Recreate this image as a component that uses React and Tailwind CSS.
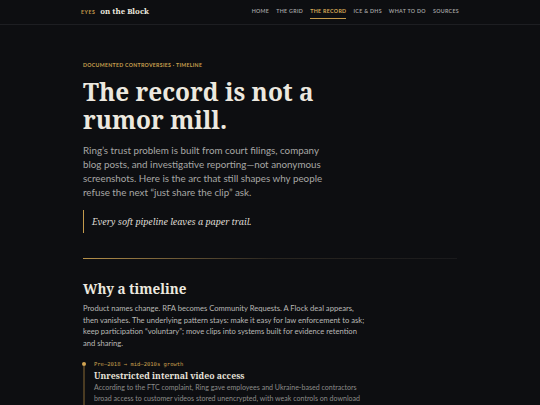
const nav = ["HOME", "THE GRID", "THE RECORD", "ICE & DHS", "WHAT TO DO", "SOURCES"];

function NavItem({ label, active }) {
  if (active) {
    return (
      <span className="relative text-[5.3px] font-bold tracking-[0.06em] text-[#d6a957]">
        {label}
        <span className="absolute left-0 right-0 top-[10px] h-[1px] bg-[#c49a4c]" />
      </span>
    );
  }
  return <span className="text-[5.3px] font-semibold tracking-[0.06em] text-[#a9a9a9]">{label}</span>;
}

export default function App() {
  return (
    <div className="min-h-[405px] w-full bg-[#0d0e11] font-['Lato',sans-serif] text-[#e9e5dc]">
      <header className="h-[25px] border-b border-[#1d1e22]">
        <div className="mx-auto flex h-full max-w-[378px] items-center justify-between">
          <div className="flex items-baseline gap-[5px]">
            <span className="text-[5.2px] font-bold tracking-[0.1em] text-[#c49a4c]">EYES</span>
            <span className="font-['Noto_Serif',serif] text-[7.8px] font-bold text-[#ece8df]">on the Block</span>
          </div>
          <nav className="flex items-center gap-[7px]">
            {nav.map((n) => (
              <NavItem key={n} label={n} active={n === "THE RECORD"} />
            ))}
          </nav>
        </div>
      </header>
      <main className="mx-auto max-w-[374px] pt-[36px]">
        <div className="text-[5.2px] font-bold leading-[8px] tracking-[0.06em] text-[#c9a04f]">DOCUMENTED CONTROVERSIES · TIMELINE</div>
        <h1 className="mt-[9px] font-['Noto_Serif',serif] text-[24.4px] font-bold leading-[28px] text-[#ece8df]">
          The record is not a<br />rumor mill.
        </h1>
        <p className="mt-[9px] max-w-[248px] text-[9.8px] leading-[14px] text-[#a7a7a5]">
          Ring’s trust problem is built from court filings, company blog posts, and investigative reporting—not anonymous screenshots. Here is the arc that still shapes why people refuse the next “just share the clip” ask.
        </p>
        <div className="mt-[11px] border-l-[1.5px] border-[#c49a4c] py-[5px] pl-[8px]">
          <p className="font-['Noto_Serif',serif] text-[8.9px] italic leading-[13px] text-[#dcd8d0]">Every soft pipeline leaves a paper trail.</p>
        </div>
        <div className="mt-[25px] h-[1px] w-full bg-gradient-to-r from-[#b8924a] via-[#2a2620] to-[#1a1a1c]" />
        <h2 className="mt-[20px] font-['Noto_Serif',serif] text-[13.5px] font-bold leading-[20px] text-[#ece8df]">Why a timeline</h2>
        <p className="mt-[4px] max-w-[284px] text-[7.6px] leading-[11.7px] text-[#b9b9b6]">
          Product names change. RFA becomes Community Requests. A Flock deal appears, then vanishes. The underlying pattern stays: make it easy for law enforcement to ask; keep participation “voluntary”; move clips into systems built for evidence retention and sharing.
        </p>
        <div className="relative mt-[10px] pl-[11px]">
          <span className="absolute left-[-1px] top-[2px] h-[4px] w-[4px] rounded-full bg-[#d2a553]" />
          <span className="absolute bottom-0 left-[0.3px] top-[6px] w-[1.5px] bg-[#4a3b22]" />
          <div className="font-['DejaVu_Sans_Mono',monospace] text-[5.5px] leading-[8px] text-[#c9a04f]">Pre–2018 → mid–2010s growth</div>
          <div className="mt-[2px] font-['Noto_Serif',serif] text-[8.7px] font-bold leading-[12px] text-[#e6e2da]">Unrestricted internal video access</div>
          <p className="mt-[0.5px] max-w-[272px] text-[7.05px] leading-[11px] text-[#8c8c8a]">
            According to the FTC complaint, Ring gave employees and Ukraine-based contractors broad access to customer videos stored unencrypted, with weak controls on download and use.
          </p>
        </div>
      </main>
    </div>
  );
}
